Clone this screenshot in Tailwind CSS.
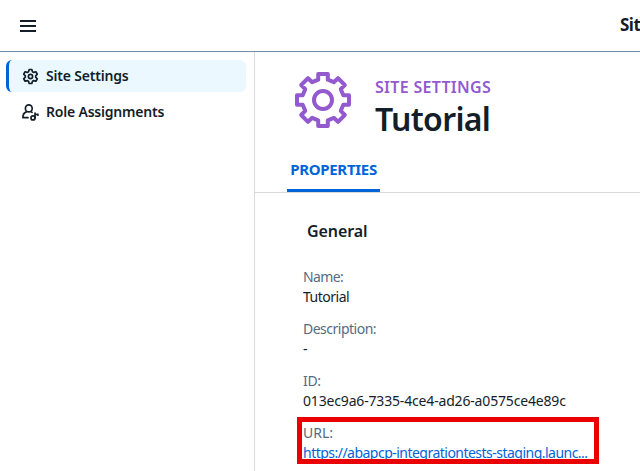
<!DOCTYPE html>
<html lang="en">
<head>
<meta charset="utf-8">
<title>Site Settings</title>
<script src="https://cdn.jsdelivr.net/npm/@tailwindcss/browser@4"></script>
</head>
<body class="h-[471px] w-[640px] overflow-hidden bg-white font-['Noto_Sans',sans-serif] text-sm leading-5 text-[#131e29]">
<header class="flex h-[52px] items-center justify-between border-b border-[#758ca4] pl-5">
  <svg class="h-4 w-4" viewBox="0 0 16 16" fill="none" stroke="currentColor" stroke-width="2"><path d="M0 3h16M0 8h16M0 13h16"/></svg>
  <div class="w-5 overflow-hidden pb-0.5 text-[17px] font-bold whitespace-nowrap tracking-[-0.5px]">Site</div>
</header>
<div class="flex h-[419px]">
  <nav class="w-[255px] shrink-0 border-r border-[#d9d9d9] pt-2 pl-1.5 font-semibold">
    <div class="flex h-8 w-60 items-center rounded-md border-l-3 border-[#0064d9] bg-[#ebf8ff] pl-[13px]">
      <svg class="mr-[7px] h-[17px] w-[17px]" viewBox="-8.5 -8.5 17 17" fill="none" stroke="currentColor" stroke-width="1.7" stroke-linejoin="round"><path d="M-1.3-7H1.3L2-4.8L3.2-4.1L5.4-4.7L6.8-2.3L5.2-.7V.7L6.8 2.3L5.4 4.7L3.2 4.1L2 4.8L1.3 7H-1.3L-2 4.8L-3.2 4.1L-5.4 4.7L-6.8 2.3L-5.2 .7V-.7L-6.8-2.3L-5.4-4.7L-3.2-4.1L-2-4.8Z"/><circle r="2.1"/></svg>
      <span class="tracking-[-0.2px]">Site Settings</span>
    </div>
    <div class="mt-1 flex h-8 w-60 items-center pl-4">
      <svg class="mr-[7px] h-[17px] w-[17px]" viewBox="0 0 17 17" fill="none" stroke="currentColor" stroke-width="1.7" stroke-linecap="round" stroke-linejoin="round"><ellipse cx="6.8" cy="4.4" rx="3.4" ry="3.5"/><path d="M4.3 7.9C1.9 8.7 .9 10.8 .9 13.7H6M9.3 7.9L10.1 8.4M13 13.9V9C13 10.3 14.2 10.9 15.9 10.2V11.2"/><circle cx="11" cy="13.9" r="2"/></svg>
      <span class="tracking-[-0.2px]">Role Assignments</span>
    </div>
  </nav>
  <main class="min-w-0 flex-1">
    <div class="h-[141px] border-b border-[#d9d9d9]">
      <div class="flex h-24 pt-5 pl-10">
        <svg class="h-14 w-14 text-[#925ace]" viewBox="-28 -28 56 56" fill="none" stroke="currentColor" stroke-width="4" stroke-linejoin="round"><path d="M-4.8-26H4.8V-20.3L10.8-17.8L15-21.8L21.8-15L17.8-10.8L20.3-4.8H26V4.8H20.3L17.8 10.8L21.8 15L15 21.8L10.8 17.8L4.8 20.3V26H-4.8V20.3L-10.8 17.8L-15 21.8L-21.8 15L-17.8 10.8L-20.3 4.8H-26V-4.8H-20.3L-17.8-10.8L-21.8-15L-15-21.8L-10.8-17.8L-4.8-20.3Z"/><circle r="9"/></svg>
        <div class="ml-6 pt-[3px]">
          <div class="text-base leading-[25px] font-semibold text-[#925ace] tracking-[0.3px]">SITE SETTINGS</div>
          <h1 class="text-[32px] leading-[38px] font-semibold tracking-[-0.65px]">Tutorial</h1>
        </div>
      </div>
      <div class="ml-8 flex h-11 w-[93px] justify-center rounded-t-sm border-b-3 border-[#0064d9] pt-[11px] text-[15px] leading-5 font-bold whitespace-nowrap text-[#0064d9] tracking-[-0.3px]">PROPERTIES</div>
    </div>
    <section class="pl-12">
      <h2 class="pt-[26px] pl-1 text-base leading-6 font-semibold tracking-[-0.1px]">General</h2>
      <dl class="mt-[24px]">
        <dt class="text-[#556b82] tracking-[-0.65px]">Name:</dt>
        <dd class="tracking-[-0.5px]">Tutorial</dd>
        <dt class="mt-3 text-[#556b82] tracking-[-0.5px]">Description:</dt>
        <dd>-</dd>
        <dt class="mt-3 text-[#556b82] tracking-[-0.3px]">ID:</dt>
        <dd class="whitespace-nowrap tracking-[-0.17px]">013ec9a6-7335-4ce4-ad26-a0575ce4e89c</dd>
      </dl>
      <dl class="mt-1.5 -ml-1.5 h-[47px] w-[302px] overflow-hidden border-5 border-[#eb0000] pt-px pl-px">
        <dt class="text-[#556b82]">URL:</dt>
        <dd class="whitespace-nowrap text-[#0064d9] tracking-[-0.52px]">https://abapcp-integrationtests-staging.launc...</dd>
      </dl>
    </section>
  </main>
</div>
</body>
</html>
